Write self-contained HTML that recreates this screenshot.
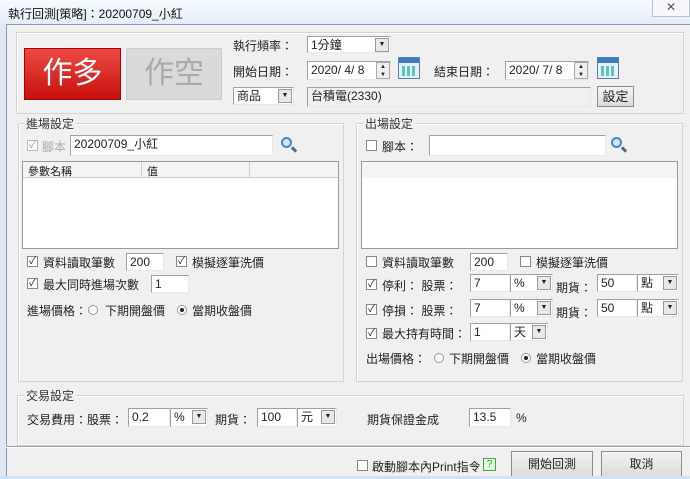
<!DOCTYPE html>
<html><head><meta charset="utf-8"><style>
*{box-sizing:border-box;margin:0;padding:0}
body{width:690px;height:479px;overflow:hidden;background:#dfe9f3;font-family:"Liberation Sans","Noto Sans CJK TC",sans-serif;font-size:12px;color:#222;position:relative}
.a{position:absolute;white-space:nowrap}
.client{position:absolute;left:6px;top:24px;width:684px;height:455px;background:#f0f0f0;border-left:1px solid #8a9bb0;border-top:1px solid #8a9bb0}
.grp{position:absolute;border:1px solid #d4d4d4;box-shadow:inset 1px 1px 0 #fff}
.gl{position:absolute;background:#f0f0f0;padding:0 2px;font-size:12px;color:#333}
.tb{position:absolute;background:#fff;border:1px solid #a0a0a0;border-right-color:#e8e8e8;border-bottom-color:#e8e8e8;font-size:12px;padding:1px 3px;line-height:14px}
.cb{position:absolute;width:11px;height:11px;border:1px solid #888;background:#fff;font-size:10px;line-height:9px;text-align:center;color:#222}
.dd{position:absolute;background:#fff;border:1px solid #a0a0a0;border-right-color:#e8e8e8;border-bottom-color:#e8e8e8;padding:1px 3px;line-height:14px}
.dd i{position:absolute;right:1px;top:1px;width:14px;height:14px;background:#e8e8e8;border:1px solid #999;font-style:normal;font-size:7px;text-align:center;line-height:12px}
.rad{position:absolute;width:10px;height:10px;border-radius:50%;border:1px solid #999;background:#fff}
.rad.on:after{content:"";position:absolute;left:2px;top:2px;width:4px;height:4px;border-radius:50%;background:#222}
.btn{position:absolute;border:1px solid #8c8c8c;background:linear-gradient(#f4f4f4,#dcdcdc);text-align:center;font-size:13px}
.cal{position:absolute;width:22px;height:22px;border:1px solid #5a7fa8;background:#e6eef6}
.cal:before{content:"";position:absolute;left:0;top:0;right:0;height:5px;background:#3d7ac0}
.cal:after{content:"";position:absolute;left:3px;top:8px;width:15px;height:10px;background:repeating-linear-gradient(90deg,#5cc6b8 0 3px,transparent 3px 5px)}
.mag{position:absolute;width:11px;height:11px;border:2px solid #4a86c8;border-radius:50%;background:#cfe4f7}
.mag:after{content:"";position:absolute;left:8px;top:9px;width:6px;height:3px;background:#4a6b8c;transform:rotate(45deg)}
.list{position:absolute;background:#fff;border:1px solid #999}
</style></head><body>
<div class="a" style="left:0;top:0;width:690px;height:24px;background:linear-gradient(#f6fafd,#e4eef8)"></div>
<div class="a" style="left:8px;top:5px;font-size:12px;color:#111">執行回測[策略]：20200709_小紅</div>
<div class="a" style="left:652px;top:0;width:38px;height:17px;border:1px solid #b8c4d2;border-top:none;background:#f6f8fb;text-align:center;font-size:12px;line-height:15px;color:#555">✕</div>
<div class="client"></div>

<div class="grp" style="left:16px;top:32px;width:668px;height:82px"></div>
<div class="a" style="left:24px;top:48px;width:97px;height:52px;background:linear-gradient(#ec4a44,#c8100c);border:1px solid #a00;color:#fff;font-size:30px;text-align:center;line-height:50px">作多</div>
<div class="a" style="left:126px;top:48px;width:96px;height:52px;background:#dadada;border:1px solid #ccc;color:#aaa;font-size:30px;text-align:center;line-height:50px">作空</div>
<div class="a" style="left:233px;top:37px">執行頻率：</div>
<div class="dd" style="left:307px;top:36px;width:84px;height:17px">1分鐘<i>▼</i></div>
<div class="a" style="left:233px;top:63px">開始日期：</div>
<div class="tb" style="left:307px;top:61px;width:84px;height:19px">2020/ 4/ 8</div>
<div class="a" style="left:376px;top:62px;width:14px;height:17px;border:1px solid #aaa;background:#eee;font-size:6px;line-height:8px;text-align:center">▲<br>▼</div>
<div class="cal" style="left:398px;top:57px"></div>
<div class="a" style="left:434px;top:63px">結束日期：</div>
<div class="tb" style="left:505px;top:61px;width:84px;height:19px">2020/ 7/ 8</div>
<div class="a" style="left:574px;top:62px;width:14px;height:17px;border:1px solid #aaa;background:#eee;font-size:6px;line-height:8px;text-align:center">▲<br>▼</div>
<div class="cal" style="left:597px;top:57px"></div>
<div class="dd" style="left:233px;top:87px;width:61px;height:18px">商品<i>▼</i></div>
<div class="tb" style="left:307px;top:87px;width:284px;height:20px;background:#f0f0f0">台積電(2330)</div>
<div class="btn" style="left:597px;top:86px;width:37px;height:21px;line-height:19px">設定</div>

<div class="grp" style="left:18px;top:123px;width:326px;height:259px"></div>
<div class="gl" style="left:24px;top:115px">進場設定</div>
<div class="cb" style="left:27px;top:140px;color:#999;border-color:#bbb">✓</div>
<div class="a" style="left:42px;top:138px;color:#aaa">腳本</div>
<div class="tb" style="left:70px;top:135px;width:203px;height:21px">20200709_小紅</div>
<div class="mag" style="left:281px;top:137px"></div>
<div class="list" style="left:22px;top:161px;width:317px;height:88px"></div>
<div class="a" style="left:23px;top:162px;width:315px;height:16px;background:#f4f4f4;border-bottom:1px solid #ccc"></div>
<div class="a" style="left:141px;top:162px;width:1px;height:16px;background:#ccc"></div>
<div class="a" style="left:249px;top:162px;width:1px;height:16px;background:#ccc"></div>
<div class="a" style="left:28px;top:163px;font-size:11px">參數名稱</div>
<div class="a" style="left:147px;top:163px;font-size:11px">值</div>

<div class="cb" style="left:27px;top:256px">✓</div><div class="a" style="left:43px;top:254px">資料讀取筆數</div>
<div class="tb" style="left:126px;top:253px;width:38px;height:18px">200</div>
<div class="cb" style="left:176px;top:256px">✓</div><div class="a" style="left:192px;top:254px">模擬逐筆洗價</div>
<div class="cb" style="left:27px;top:278px">✓</div><div class="a" style="left:43px;top:276px">最大同時進場次數</div>
<div class="tb" style="left:151px;top:275px;width:38px;height:18px">1</div>
<div class="a" style="left:27px;top:302px">進場價格：</div>
<div class="rad" style="left:88px;top:305px"></div><div class="a" style="left:105px;top:302px">下期開盤價</div>
<div class="rad on" style="left:177px;top:305px"></div><div class="a" style="left:192px;top:302px">當期收盤價</div>

<div class="grp" style="left:356px;top:123px;width:327px;height:259px"></div>
<div class="gl" style="left:363px;top:115px">出場設定</div>
<div class="cb" style="left:366px;top:140px"></div>
<div class="a" style="left:382px;top:138px">腳本：</div>
<div class="tb" style="left:429px;top:135px;width:177px;height:21px"></div>
<div class="mag" style="left:611px;top:137px"></div>
<div class="list" style="left:361px;top:161px;width:317px;height:88px"></div>
<div class="a" style="left:362px;top:162px;width:315px;height:16px;background:#f4f4f4"></div>

<div class="cb" style="left:366px;top:256px"></div><div class="a" style="left:382px;top:254px">資料讀取筆數</div>
<div class="tb" style="left:470px;top:253px;width:38px;height:18px">200</div>
<div class="cb" style="left:520px;top:256px"></div><div class="a" style="left:536px;top:254px">模擬逐筆洗價</div>
<div class="cb" style="left:366px;top:279px">✓</div><div class="a" style="left:382px;top:277px">停利：&nbsp;股票：</div>
<div class="tb" style="left:470px;top:274px;width:40px;height:18px">7</div>
<div class="dd" style="left:510px;top:274px;width:43px;height:18px">%<i>▼</i></div>
<div class="a" style="left:556px;top:279px">期貨：</div>
<div class="tb" style="left:597px;top:274px;width:40px;height:18px">50</div>
<div class="dd" style="left:637px;top:274px;width:42px;height:18px">點<i>▼</i></div>
<div class="cb" style="left:366px;top:304px">✓</div><div class="a" style="left:382px;top:302px">停損：&nbsp;股票：</div>
<div class="tb" style="left:470px;top:299px;width:40px;height:18px">7</div>
<div class="dd" style="left:510px;top:299px;width:43px;height:18px">%<i>▼</i></div>
<div class="a" style="left:556px;top:304px">期貨：</div>
<div class="tb" style="left:597px;top:299px;width:40px;height:18px">50</div>
<div class="dd" style="left:637px;top:299px;width:42px;height:18px">點<i>▼</i></div>
<div class="cb" style="left:366px;top:328px">✓</div><div class="a" style="left:382px;top:325px">最大持有時間：</div>
<div class="tb" style="left:470px;top:323px;width:40px;height:18px">1</div>
<div class="dd" style="left:510px;top:323px;width:38px;height:18px">天<i>▼</i></div>
<div class="a" style="left:366px;top:350px">出場價格：</div>
<div class="rad" style="left:434px;top:353px"></div><div class="a" style="left:449px;top:350px">下期開盤價</div>
<div class="rad on" style="left:521px;top:353px"></div><div class="a" style="left:536px;top:350px">當期收盤價</div>

<div class="grp" style="left:17px;top:395px;width:667px;height:51px"></div>
<div class="gl" style="left:24px;top:387px">交易設定</div>
<div class="a" style="left:27px;top:411px">交易費用：股票：</div>
<div class="tb" style="left:128px;top:408px;width:42px;height:19px">0.2</div>
<div class="dd" style="left:170px;top:408px;width:38px;height:19px">%<i>▼</i></div>
<div class="a" style="left:215px;top:411px">期貨：</div>
<div class="tb" style="left:257px;top:408px;width:40px;height:19px">100</div>
<div class="dd" style="left:297px;top:408px;width:40px;height:19px">元<i>▼</i></div>
<div class="a" style="left:367px;top:411px">期貨保證金成</div>
<div class="tb" style="left:469px;top:408px;width:42px;height:19px">13.5</div>
<div class="a" style="left:516px;top:411px">%</div>

<div class="a" style="left:6px;top:446px;width:684px;height:1px;background:#a0a0a0"></div>
<div class="a" style="left:6px;top:447px;width:684px;height:1px;background:#fff"></div>
<div class="cb" style="left:357px;top:460px"></div>
<div class="a" style="left:372px;top:458px">啟動腳本內Print指令</div>
<div class="a" style="left:483px;top:458px;width:13px;height:13px;border:1px solid #4a4;background:#dfd;color:#393;font-size:10px;text-align:center;line-height:11px">?</div>
<div class="btn" style="left:511px;top:451px;width:82px;height:26px;line-height:24px;font-size:12px">開始回測</div>
<div class="btn" style="left:601px;top:451px;width:81px;height:26px;line-height:24px;font-size:12px">取消</div>
<div class="a" style="left:0;top:476px;width:690px;height:3px;background:#cfe3f2"></div>
</body></html>
